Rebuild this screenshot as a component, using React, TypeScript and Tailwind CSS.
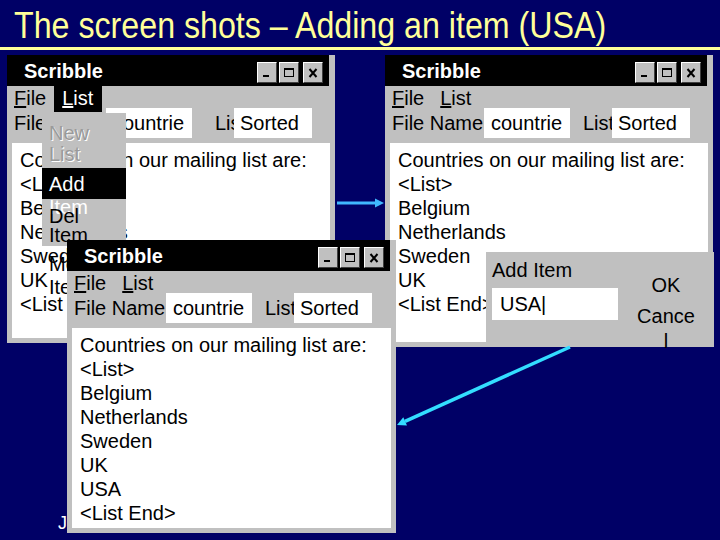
import React from "react";

type CapKind = "min" | "max" | "close";

function CapButton({ kind }: { kind: CapKind }) {
  return (
    <div className="w-[20px] h-[21px] bg-[#c0c0c0] border border-t-white border-l-white border-r-[#404040] border-b-[#404040] flex items-center justify-center">
      <svg width="14" height="12" viewBox="0 0 14 12">
        {kind === "min" && <rect x="3" y="8" width="6" height="2" fill="#000" />}
        {kind === "max" && (
          <>
            <rect x="2.5" y="1.5" width="9" height="8" fill="none" stroke="#000" />
            <rect x="2" y="1" width="10" height="2" fill="#000" />
          </>
        )}
        {kind === "close" && <path d="M3.5 2 L10.5 10 M10.5 2 L3.5 10" stroke="#000" strokeWidth="2" />}
      </svg>
    </div>
  );
}

function TitleBar() {
  return (
    <div className="h-[31px] mr-[6px] bg-black flex items-center justify-between pl-[17px] pr-[6px] shrink-0">
      <span className="text-white font-bold text-[20px] leading-none">Scribble</span>
      <div className="flex items-center mt-[4px]">
        <CapButton kind="min" />
        <div className="ml-[2px]">
          <CapButton kind="max" />
        </div>
        <div className="ml-[4px]">
          <CapButton kind="close" />
        </div>
      </div>
    </div>
  );
}

interface WinProps {
  className: string;
  lines: string[];
  active?: boolean;
  listLabel: string;
  children?: React.ReactNode;
}

function Win({ className, lines, active, listLabel, children }: WinProps) {
  return (
    <div className={`absolute flex flex-col bg-[#c0c0c0] text-black ${className}`}>
      <TitleBar />
      <div className="h-[22px] flex items-start pl-[7px] text-[20px] leading-[22px] shrink-0">
        <span className="pt-[1px]">
          <span className="underline">F</span>ile
        </span>
        <span className={`ml-[8px] w-[48px] pl-[8px] shrink-0 pt-[1px] ${active ? "h-[26px] bg-black text-white" : ""}`}>
          <span className="underline">L</span>ist
        </span>
      </div>
      <div className="h-[30px] flex items-center pl-[7px] text-[20px] shrink-0">
        <div className="w-[92px] h-full flex items-center whitespace-nowrap overflow-hidden">File Name</div>
        <div className="w-[86px] h-full bg-white pl-[7px] flex items-center overflow-hidden whitespace-nowrap">countrie</div>
        <div className={`h-full flex items-center whitespace-nowrap overflow-hidden ${listLabel}`}>List Type</div>
        <div className="w-[78px] h-full bg-white pl-[6px] flex items-center overflow-hidden whitespace-nowrap">Sorted</div>
      </div>
      <div className="mx-[5px] mt-[5px] mb-[5px] flex-1 bg-white pl-[8px] pt-[5px] text-[20px] leading-[24px] overflow-hidden">
        {lines.map((l) => (
          <div key={l} className="whitespace-nowrap">
            {l}
          </div>
        ))}
      </div>
      {children}
    </div>
  );
}

const base = ["Countries on our mailing list are:", "<List>", "Belgium", "Netherlands", "Sweden", "UK"];

export default function App() {
  return (
    <div className="relative w-[720px] h-[540px] overflow-hidden bg-[#000066] font-['Liberation_Sans',Arial,sans-serif]">
      <div className="h-[47px] pl-[14px] pt-[5px]">
        <div className="text-[37px] leading-[42px] text-[#ffff99] whitespace-nowrap origin-left scale-x-[0.87]">
          The screen shots – Adding an item (USA)
        </div>
      </div>
      <div className="h-[3px] bg-[#ffff99]" />

      <div className="absolute left-[58px] top-[512px] text-[18px] leading-[22px] text-white whitespace-nowrap">
        John Smith, Computer Programming
      </div>

      <Win className="left-[7px] top-[55px] w-[328px] h-[288px]" lines={[...base, "<List End>"]} active listLabel="ml-[23px] w-[19px]">
        <div className="absolute left-[35px] top-[58px] w-[84px] h-[133px] bg-[#c0c0c0] text-[20px] pl-[7px]">
          <div className="pt-[10px] leading-[21px] text-[#9a9a9a] [text-shadow:1px_1px_0_#ffffff]">
            New
            <br />
            List
          </div>
          <div className="mt-[3px] -ml-[7px] pl-[7px] h-[31px] bg-black text-white pt-[5px] leading-[23px]">
            Add
            <br />
            Item
          </div>
          <div className="pt-[8px] leading-[19px] text-black">
            Del
            <br />
            Item
          </div>
          <div className="pt-[8px] leading-[23px] text-black">
            Mod
            <br />
            Item
          </div>
        </div>
      </Win>

      <Win className="left-[385px] top-[55px] w-[328px] h-[292px]" lines={[...base, "<List End>"]} listLabel="ml-[13px] w-[29px]">
        <div className="absolute left-[101px] top-[197px] w-[228px] h-[95px] bg-[#c0c0c0] flex text-[20px]">
          <div className="w-[150px] pl-[6px] pt-[6px]">
            <div className="leading-[24px]">Add Item</div>
            <div className="mt-[6px] w-[126px] h-[32px] bg-white pl-[8px] flex items-center">USA|</div>
          </div>
          <div className="w-[60px] pt-[21px] text-center leading-[25px]">
            <div>OK</div>
            <div className="mt-[6px] break-all">Cancel</div>
          </div>
        </div>
      </Win>

      <svg className="absolute left-0 top-0 pointer-events-none" width="720" height="540">
        <line x1="337" y1="203" x2="376" y2="203" stroke="#40b8ff" strokeWidth="3" />
        <polygon points="384,203 375,198.5 375,207.5" fill="#40b8ff" />
        <line x1="570" y1="347" x2="405" y2="421.3" stroke="#33ddff" strokeWidth="3.5" />
        <polygon points="397,425 407,425.4 403.3,417.2" fill="#33ddff" />
      </svg>

      <Win
        className="left-[67px] top-[240px] w-[329px] h-[293px]"
        lines={[...base, "USA", "<List End>"]}
        listLabel="ml-[13px] w-[29px]"
      />
    </div>
  );
}
